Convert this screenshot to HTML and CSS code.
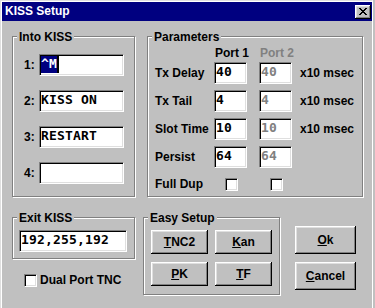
FILE: index.html
```html
<!DOCTYPE html>
<html>
<head>
<meta charset="utf-8">
<title>KISS Setup</title>
<link rel="stylesheet" href="styles.css">
</head>
<body>
<div class="window">
  <div class="titlebar">
    <span class="title">KISS Setup</span>
    <span class="close">
      <svg width="16" height="14" viewBox="0 0 16 14">
        <path d="M4 3h2v1h-2zM10 3h2v1h-2zM5 4h2v1h-2zM9 4h2v1h-2zM6 5h4v1h-4zM7 6h2v1h-2zM6 7h4v1h-4zM5 8h2v1h-2zM9 8h2v1h-2zM4 9h2v1h-2zM10 9h2v1h-2z" fill="#000"/>
      </svg>
    </span>
  </div>

  <div class="top-row">
    <div class="group into">
      <div class="group-title">Into KISS</div>
      <div class="into-grid">
        <span class="lbl">1:</span><div class="field"><span class="sel">^M</span><span class="caret"></span></div>
        <span class="lbl">2:</span><div class="field">KISS ON</div>
        <span class="lbl">3:</span><div class="field">RESTART</div>
        <span class="lbl">4:</span><div class="field"></div>
      </div>
    </div>

    <div class="group params">
      <div class="group-title">Parameters</div>
      <div class="params-grid">
        <span></span><span class="head">Port 1</span><span class="head dis">Port 2</span><span></span>

        <span class="lbl">Tx Delay</span><div class="field num">40</div><div class="field num dis">40</div><span class="unit">x10 msec</span>
        <span class="lbl">Tx Tail</span><div class="field num">4</div><div class="field num dis">4</div><span class="unit">x10 msec</span>
        <span class="lbl">Slot Time</span><div class="field num">10</div><div class="field num dis">10</div><span class="unit">x10 msec</span>
        <span class="lbl">Persist</span><div class="field num">64</div><div class="field num dis">64</div><span></span>
        <span class="lbl small">Full Dup</span><span class="check c-off"></span><span class="check c-off"></span><span></span>
      </div>
    </div>
  </div>

  <div class="bottom-row">
    <div class="left-col">
      <div class="group exit">
        <div class="group-title">Exit KISS</div>
        <div class="field exit-field">192,255,192</div>
      </div>
      <div class="dual">
        <span class="check"></span>
        <span>Dual Port TNC</span>
      </div>
    </div>

    <div class="group easy">
      <div class="group-title">Easy Setup</div>
      <div class="easy-grid">
        <div class="btn"><span><u>T</u>NC2</span></div>
        <div class="btn"><span><u>K</u>an</span></div>
        <div class="btn"><span><u>P</u>K</span></div>
        <div class="btn"><span><u>T</u>F</span></div>
      </div>
    </div>

    <div class="btns">
      <div class="btn big"><span><u>O</u>k</span></div>
      <div class="btn big"><span><u>C</u>ancel</span></div>
    </div>
  </div>
</div>
</body>
</html>
```

FILE: styles.css
```css
html, body {
  margin: 0;
  padding: 0;
}

body {
  width: 375px;
  height: 308px;
  overflow: hidden;
  background: #c0c0c0;
  color: #000;
  font-family: "Liberation Sans", Arial, sans-serif;
  font-weight: bold;
  font-size: 12px;
}

.window {
  width: 373px;
  height: 308px;
  box-sizing: border-box;
  border-left: 1px solid #dfdfdf;
  border-top: 1px solid #dfdfdf;
  border-right: 1px solid #fff;
  box-shadow: inset 1px 1px #fff;
  padding: 1px 0 0 1px;
}

/* title bar */
.titlebar {
  height: 19px;
  background: #000080;
  color: #fff;
  display: flex;
  justify-content: space-between;
  align-items: flex-start;
  padding-left: 3px;
}

.title {
  line-height: 19px;
}

.close {
  display: flex;
  width: 16px;
  height: 14px;
  margin: 3px 1px 0 0;
  background: #c0c0c0;
  box-shadow: inset -1px -1px #000, inset 1px 1px #fff, inset -2px -2px #808080, inset 2px 2px #dfdfdf;
}

/* group boxes */
.group {
  box-sizing: border-box;
  border: 1px solid #808080;
  box-shadow: inset 1px 1px #fff, 1px 1px #fff;
}

.group-title {
  width: max-content;
  height: 14px;
  line-height: 14px;
  margin: -7px 0 0 4px;
  padding: 0 2px;
  background: #c0c0c0;
}

.top-row {
  display: flex;
  gap: 12px;
  margin: 15px 0 0 10px;
}

.into {
  width: 123px;
  height: 161px;
}

.params {
  width: 216px;
  height: 161px;
}

/* text fields */
.field {
  box-sizing: border-box;
  height: 22px;
  background: #fff;
  border: 1px solid;
  border-color: #808080 #fff #fff #808080;
  box-shadow: inset 1px 1px #000, inset -1px -1px #dfdfdf;
  padding: 1px 0 0 1px;
  font-family: "DejaVu Sans Mono", "Liberation Mono", monospace;
  font-weight: bold;
  font-size: 13px;
  letter-spacing: 0.17px;
  line-height: 15px;
  white-space: pre;
  overflow: hidden;
}

.sel {
  background: #000080;
  color: #fff;
  padding-bottom: 2px;
}

.caret {
  display: inline-block;
  width: 2px;
  height: 17px;
  background: #000;
  vertical-align: top;
}

.into-grid {
  display: grid;
  grid-template-columns: 15px 85px;
  grid-auto-rows: 22px;
  row-gap: 14px;
  margin-top: 10px;
  padding-left: 11px;
}

.lbl {
  line-height: 22px;
  white-space: nowrap;
}

.lbl.small {
  line-height: 13px;
}

.params-grid {
  display: grid;
  grid-template-columns: 59px 45px 41px auto;
  grid-template-rows: 16px 28px 28px 28px 32px 13px;
  align-items: start;
  margin-top: 2px;
  padding-left: 7px;
}

.head {
  line-height: 14px;
  padding-left: 1px;
}

.dis {
  color: #808080;
}

.field.num {
  width: 33px;
}

.unit {
  line-height: 22px;
  white-space: nowrap;
}

.check {
  display: block;
  box-sizing: border-box;
  width: 13px;
  height: 13px;
  background: #fff;
  border: 1px solid;
  border-color: #808080 #fff #fff #808080;
  box-shadow: inset 1px 1px #000, inset -1px -1px #dfdfdf;
}

.check.c-off {
  margin-left: 11px;
}

/* bottom row */
.bottom-row {
  display: flex;
  align-items: flex-start;
  margin: 20px 0 0 10px;
}

.left-col {
  width: 123px;
}

.exit {
  width: 123px;
  height: 42px;
}

.exit-field {
  width: 108px;
  margin: 5px 0 0 6px;
}

.dual {
  display: flex;
  align-items: flex-start;
  gap: 3px;
  line-height: 13px;
  margin: 15px 0 0 12px;
}

.easy {
  width: 137px;
  height: 78px;
  margin-left: 8px;
}

.easy-grid {
  display: grid;
  grid-template-columns: 57px 57px;
  grid-auto-rows: 24px;
  gap: 8px 7px;
  margin: 5px 0 0 7px;
}

.btn {
  display: flex;
  align-items: center;
  justify-content: center;
  box-sizing: border-box;
  padding-bottom: 1px;
  background: #c0c0c0;
  box-shadow: inset -1px -1px #000, inset 1px 1px #fff, inset -2px -2px #808080, inset 2px 2px #dfdfdf;
  line-height: 14px;
}

.btns {
  display: flex;
  flex-direction: column;
  gap: 8px;
  margin: 9px 0 0 15px;
}

.btn.big {
  width: 61px;
  height: 28px;
  padding-bottom: 0;
}
```
